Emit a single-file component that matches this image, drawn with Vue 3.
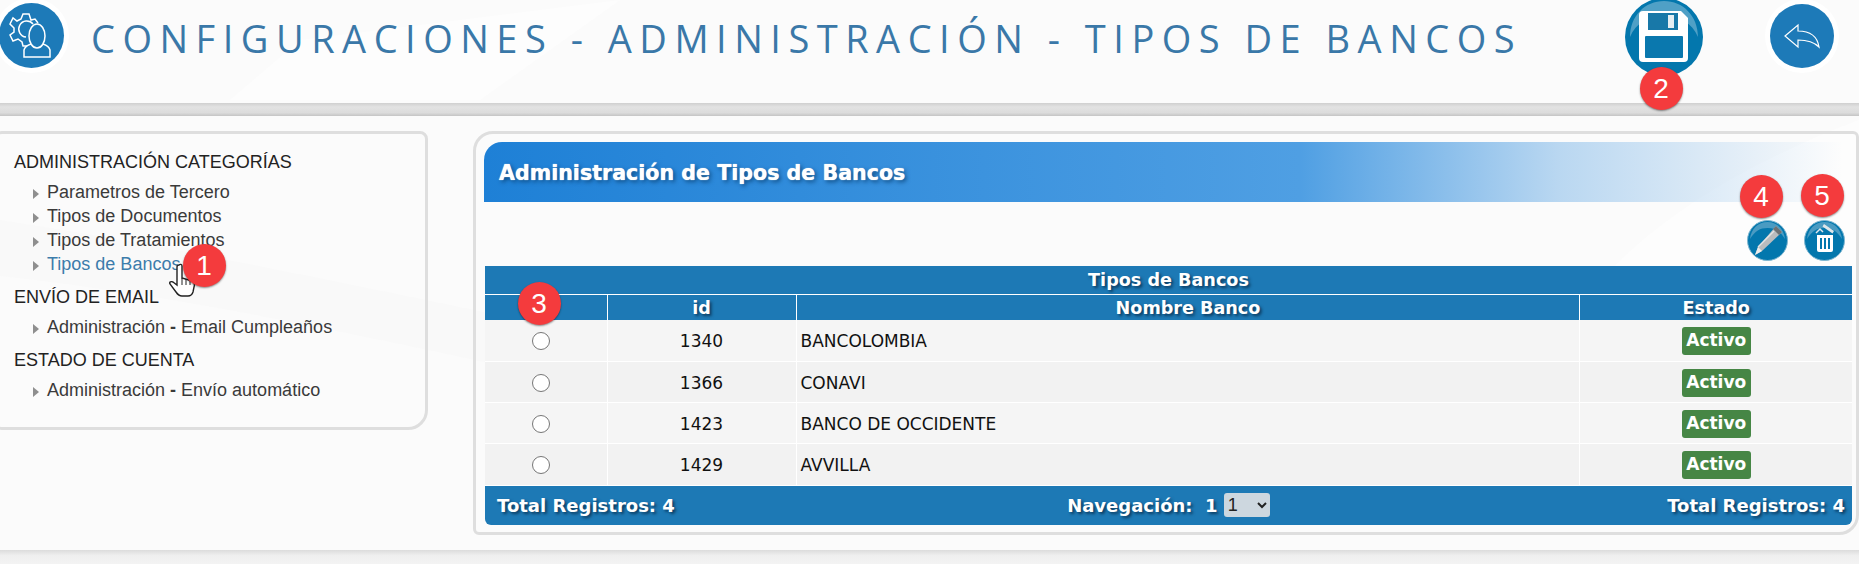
<template>
  <div class="page">
    <svg class="swoosh" width="1859" height="564" viewBox="0 0 1859 564">
      <path d="M0 276 C 220 300 420 350 620 390 L 620 340 C 420 300 200 250 0 220 Z" fill="#f9f9f9" />
      <path d="M1859 120 C 1700 180 1600 260 1560 340 L 1859 340 Z" fill="#fdfdfd" />
      <path d="M230 100 L 300 40 L 620 0 L 480 100 Z" fill="#fdfdfd" />
    </svg>

    <header class="top-bar">
      <div class="round-icon logo-icon">
        <svg width="65" height="65" viewBox="-1 3 65 65" fill="none" stroke="#fff" stroke-width="1.5">
          <path d="M38 23L35 19L31 20L29 14L23 14L21 19L17 21L13 18L10 24L14 28L14 32L10 35L13 41L18 39L22 42L23 46L27 46" />
          <path d="M33 24a8 8 0 1 0-7 13" />
          <ellipse cx="37" cy="36" rx="8" ry="12" />
          <path d="M31 44c-3 1-6 2-7 6v7h26v-7c-1-4-4-5-7-6" />
        </svg>
      </div>
      <h1 class="page-title">CONFIGURACIONES - ADMINISTRACIÓN - TIPOS DE BANCOS</h1>
      <svg class="save-icon" width="78" height="78" viewBox="0 0 78 78">
        <circle cx="39" cy="39" r="39" fill="#0377ad" />
        <path d="M5 39C5 18 20 3 39 3s34 15 34 36c-6-14-18-21-34-21S11 25 5 39Z" fill="#4fa0c6" />
        <path d="M18 13h38l7 7v40a4 4 0 0 1-4 4H18a4 4 0 0 1-4-4V17a4 4 0 0 1 4-4Z" fill="#fff" />
        <path d="M23 15h30v17H23Z" fill="#1878a8" />
        <rect x="43" y="17" width="6" height="13" fill="#e6eef2" />
        <rect x="20" y="38" width="38" height="22" rx="1" fill="#0a78ae" />
      </svg>
      <div class="round-icon back-icon">
        <svg width="64" height="64" viewBox="0 0 64 64" fill="none" stroke="#fff" stroke-width="1.2">
          <path d="M15 32 L28 21 L28 27 C38 27 47 30 49 43 C44 38 38 36 28 36 L28 43 Z" />
        </svg>
      </div>
    </header>
    <div class="top-band"></div>

    <main class="content">
      <nav class="side-menu">
        <template v-for="group in menu" :key="group.title">
          <div class="menu-title">{{ group.title }}</div>
          <ul>
            <li v-for="item in group.items" :key="item.label" :class="{ active: item.active }">
              <span class="arrow"></span>{{ item.label }}<template v-if="item.rest">{{ ' ' }}<b>-</b>{{ ' ' + item.rest }}</template>
            </li>
          </ul>
        </template>
      </nav>

      <section class="main-panel">
        <h2 class="panel-title">Administración de Tipos de Bancos</h2>
        <div class="toolbar">
          <svg class="tool-icon" width="41" height="41" viewBox="0 0 41 41">
            <circle cx="20.5" cy="20.5" r="20" fill="#0377ad" stroke="#7fb6d0" stroke-width="1" />
            <path d="M3 19C4 9 11 2 20.5 2S37 9 38 19C33 11 28 8 20.5 8S8 11 3 19Z" fill="#4a9bc2" />
            <path d="M29 6l6 6-20 19-7 4 3-8Z" fill="#b9bcbe" />
            <path d="M29 6l6 6-3 3-6-6Z" fill="#6d7275" />
            <path d="M27 11l-16 16" stroke="#e4e4e4" stroke-width="1.5" />
            <path d="M11 27l4 4-7 4Z" fill="#ececec" />
          </svg>
          <svg class="tool-icon" width="41" height="41" viewBox="0 0 41 41">
            <circle cx="20.5" cy="20.5" r="20" fill="#0377ad" stroke="#7fb6d0" stroke-width="1" />
            <path d="M3 19C4 9 11 2 20.5 2S37 9 38 19C33 11 28 8 20.5 8S8 11 3 19Z" fill="#4a9bc2" />
            <path d="M13 15h16v15a2 2 0 0 1-2 2H15a2 2 0 0 1-2-2Z" fill="#fff" />
            <path d="M17 18v11M21 18v11M25 18v11" stroke="#0377ad" stroke-width="2" />
            <path d="M20 4l10 7-1.500 2.500-10-7Z" fill="#dfe6ea" />
            <path d="M12 13l4-4 3 3" fill="none" stroke="#dfe6ea" stroke-width="1.500" />
          </svg>
        </div>

        <table class="bank-table">
          <colgroup>
            <col class="c-radio" />
            <col class="c-id" />
            <col />
            <col class="c-state" />
          </colgroup>
          <thead>
            <tr class="caption-row"><th colspan="4">Tipos de Bancos</th></tr>
            <tr class="head-row">
              <th></th>
              <th>id</th>
              <th>Nombre Banco</th>
              <th>Estado</th>
            </tr>
          </thead>
          <tbody>
            <tr v-for="bank in banks" :key="bank.id">
              <td class="center"><input class="radio" type="radio" name="banco" /></td>
              <td class="center">{{ bank.id }}</td>
              <td class="name">{{ bank.name }}</td>
              <td class="center"><span class="state">Activo</span></td>
            </tr>
          </tbody>
        </table>
        <div class="table-foot">
          <span>Total Registros: 4</span>
          <span class="pager">Navegación:&nbsp; 1 <select class="page-select"><option>1</option></select></span>
          <span>Total Registros: 4</span>
        </div>
      </section>
    </main>
    <div class="bottom-band"></div>

    <svg class="hand" width="28" height="34" viewBox="0 0 28 34">
      <path d="M10 2c1-1 3-1 3 1v12l10 3c2 1 3 3 2 6l-1 5c-1 3-2 4-5 4h-6c-3 0-4-1-6-4L1 21c-1-2 1-3 3-2l4 3V4c0-1 1-2 2-2Z" fill="#fff" stroke="#222" stroke-width="1.400" />
      <path d="M13 15v7M17 16v6M21 17v5" stroke="#222" stroke-width="1" />
    </svg>

    <span v-for="mark in marks" :key="mark.n" class="mark" :style="{ left: mark.x + 'px', top: mark.y + 'px' }">{{ mark.n }}</span>
  </div>
</template>

<script setup>
const menu = [
  {
    title: 'ADMINISTRACIÓN CATEGORÍAS',
    items: [
      { label: 'Parametros de Tercero' },
      { label: 'Tipos de Documentos' },
      { label: 'Tipos de Tratamientos' },
      { label: 'Tipos de Bancos', active: true }
    ]
  },
  { title: 'ENVÍO DE EMAIL', items: [{ label: 'Administración', rest: 'Email Cumpleaños' }] },
  { title: 'ESTADO DE CUENTA', items: [{ label: 'Administración', rest: 'Envío automático' }] }
];

const banks = [
  { id: 1340, name: 'BANCOLOMBIA' },
  { id: 1366, name: 'CONAVI' },
  { id: 1423, name: 'BANCO DE OCCIDENTE' },
  { id: 1429, name: 'AVVILLA' }
];

// numbered callouts, centre coordinates on the screenshot
const marks = [
  { n: 1, x: 204, y: 265 },
  { n: 2, x: 1661, y: 88 },
  { n: 3, x: 539, y: 303 },
  { n: 4, x: 1761, y: 196 },
  { n: 5, x: 1822, y: 195 }
];
</script>

<style>
html, body { margin: 0; background: #fbfbfb; }
</style>

<style scoped>
.page {
  position: relative;
  width: 1859px;
  height: 564px;
  overflow: hidden;
  display: flex;
  flex-direction: column;
  background: #fbfbfb;
  font-family: "Liberation Sans", Arial, sans-serif;
}

.swoosh {
  position: absolute;
  left: 0;
  top: 0;
}

.top-bar {
  position: relative;
  display: flex;
  align-items: flex-start;
  height: 103px;
  flex: none;
}

.round-icon {
  flex: none;
  border-radius: 50%;
  background: #1d7ab8;
  box-shadow: 0 0 0 5px #fff;
}

.round-icon svg {
  display: block;
}

.logo-icon {
  width: 65px;
  height: 65px;
  margin: 3px 0 0 -1px;
}

.page-title {
  flex: 1;
  margin: 11px 0 0 27px;
  font-family: "Open Sans", sans-serif;
  font-size: 38px;
  line-height: 54px;
  font-weight: 400;
  letter-spacing: 7.5px;
  color: #3a78a8;
  white-space: nowrap;
}

.save-icon {
  flex: none;
  margin: -2px 0 0 0;
}

.back-icon {
  width: 64px;
  height: 64px;
  margin: 4px 25px 0 67px;
}

.top-band {
  flex: none;
  height: 13px;
  background: linear-gradient(#cfcfcf, #e2e2e2 30%, #dcdcdc 75%, #c4c4c4);
}

.content {
  position: relative;
  flex: none;
  display: flex;
  align-items: flex-start;
  gap: 45px;
  height: 434px;
  padding-top: 15px;
  box-sizing: border-box;
}

.side-menu {
  flex: none;
  width: 438px;
  height: 299px;
  margin-left: -10px;
  box-sizing: border-box;
  padding: 16px 0 0 21px;
  border: 3px solid #dedede;
  border-radius: 12px 8px 20px 12px;
}

.menu-title {
  font-size: 18px;
  line-height: 24px;
  color: #222;
}

.side-menu ul {
  list-style: none;
  margin: 6px 0 9px;
  padding: 0 0 0 19px;
}

.side-menu li {
  position: relative;
  padding-left: 14px;
  font-size: 18px;
  line-height: 24px;
  color: #3a3a3a;
}

.side-menu li.active {
  color: #3c7cab;
}

.arrow {
  position: absolute;
  left: 0;
  top: 9px;
  width: 0;
  height: 0;
  border-left: 6px solid #8f8f8f;
  border-top: 5px solid transparent;
  border-bottom: 5px solid transparent;
}

.main-panel {
  flex: 1;
  height: 404px;
  min-width: 0;
  box-sizing: border-box;
  padding: 8px 4px 0 8px;
  border: 3px solid #dedede;
  border-radius: 20px 6px 20px 6px;
}

.panel-title {
  height: 60px;
  margin: 0 9px 0 0;
  padding-left: 15px;
  border-radius: 18px 0 0 0;
  background: linear-gradient(90deg, #1e80d6 0%, #4f9fe3 60%, #b9d7f1 79%, rgba(255, 255, 255, 0) 100%);
  font-family: "DejaVu Sans", Verdana, sans-serif;
  font-size: 20.600px;
  line-height: 62px;
  font-weight: 700;
  color: #fff;
  text-shadow: 0 0 1px #fff, 2px 2px 4px #0d4a80;
}

.toolbar {
  display: flex;
  justify-content: flex-end;
  gap: 16px;
  height: 64px;
  box-sizing: border-box;
  padding: 18px 7px 0 0;
}

.tool-icon {
  flex: none;
}

.bank-table {
  width: 1367px;
  margin-left: 1px;
  border-collapse: collapse;
  table-layout: fixed;
  font-family: "DejaVu Sans", Verdana, sans-serif;
  font-size: 17px;
  color: #111;
}

.c-radio { width: 122px; }
.c-id { width: 189px; }
.c-state { width: 272px; }

.bank-table th {
  padding: 0;
  background: #1d79b5;
  color: #fff;
  font-size: 17.600px;
  line-height: 22px;
  font-weight: 700;
  text-shadow: 2px 2px 3px #0b3a5e;
}

.caption-row th {
  height: 28px;
  border-bottom: 1px solid #fff;
}

.head-row th {
  height: 25px;
  border-left: 1px solid #fff;
}

.head-row th:first-child {
  border-left: 0;
}

.bank-table td {
  height: 41.250px;
  padding: 2px 0 0;
  box-sizing: border-box;
  background: #f5f5f5;
  border-left: 1px solid #fff;
  border-bottom: 1px solid #fff;
}

.bank-table td:first-child {
  border-left: 0;
}

.bank-table tbody tr:nth-child(even) td {
  background: #f2f2f2;
}

.center {
  text-align: center;
}

.name {
  padding-left: 4px !important;
}

.radio {
  appearance: none;
  display: block;
  width: 18px;
  height: 18px;
  margin: 0 0 0 47px;
  box-sizing: border-box;
  border: 1px solid #767676;
  border-radius: 50%;
  background: #fff;
}

.state {
  display: inline-block;
  width: 69px;
  height: 28px;
  border-radius: 3px;
  background: #468645;
  color: #fff;
  font-size: 17px;
  line-height: 27px;
  font-weight: 700;
  vertical-align: middle;
}

.table-foot {
  display: flex;
  justify-content: space-between;
  align-items: center;
  width: 1367px;
  height: 39px;
  margin-left: 1px;
  box-sizing: border-box;
  padding: 0 7px 0 12px;
  border-radius: 0 0 6px 6px;
  background: #1d79b5;
  font-family: "DejaVu Sans", Verdana, sans-serif;
  font-size: 18px;
  font-weight: 700;
  color: #fff;
  text-shadow: 2px 2px 3px #0b3a5e;
}

.pager {
  display: flex;
  align-items: center;
  margin-right: 5px;
  white-space: pre;
}

.page-select {
  width: 46px;
  height: 24px;
  border: 0;
  border-radius: 3px;
  background-color: #cdd7df;
  font-family: "Liberation Sans", Arial, sans-serif;
  font-size: 18px;
  font-weight: 400;
  color: #222;
  text-shadow: none;
}

.bottom-band {
  flex: 1;
  background: linear-gradient(#dcdcdc, #efefef 40%, #f3f3f3);
}

.hand {
  position: absolute;
  left: 169px;
  top: 263px;
}

.mark {
  position: absolute;
  width: 43px;
  height: 43px;
  margin: -21.500px 0 0 -21.500px;
  border-radius: 50%;
  background: #f43b3d;
  box-shadow: 0 1px 2px rgba(0, 0, 0, 0.45);
  color: #fff;
  font-size: 28px;
  line-height: 43px;
  text-align: center;
}
</style>
